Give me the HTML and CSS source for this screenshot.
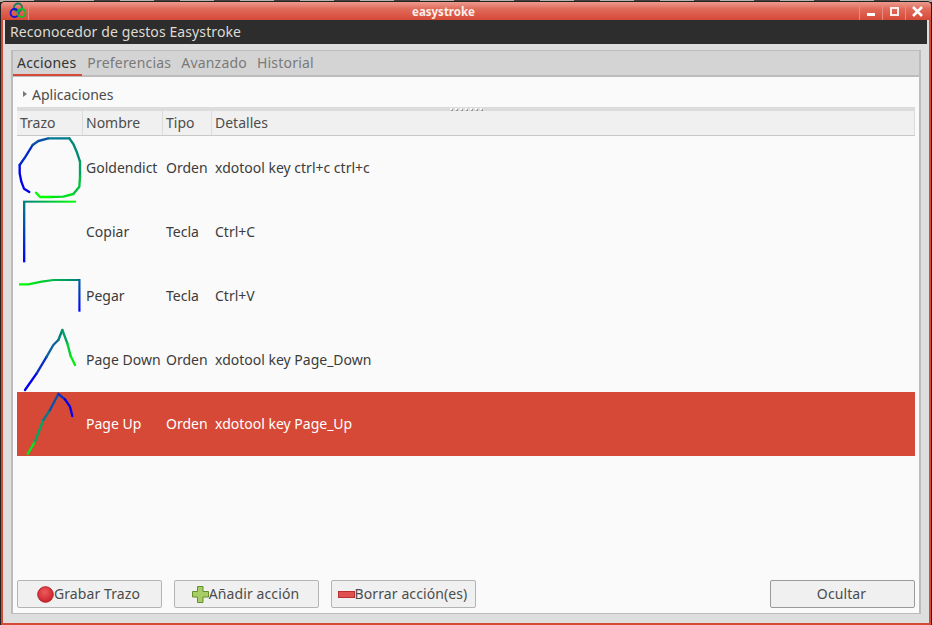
FILE: index.html
```html
<!DOCTYPE html>
<html lang="es">

<head>
    <meta charset="UTF-8" />
    <meta name="viewport" content="width=device-width, initial-scale=1.0" />
    <title>easystroke</title>
    <link rel="stylesheet" href="styles.css">
</head>

<body>
    <div class="behind"></div>
    <div class="window">
        <div class="titlebar">
            <div class="titleicon">
                <svg width="18" height="17" viewBox="0 0 18 17" fill="none" stroke-width="1.8">
                    <circle cx="9" cy="5.5" r="4" stroke="#14805a" />
                    <circle cx="5.5" cy="11" r="4" stroke="#1212e0" />
                    <circle cx="12.5" cy="11" r="4" stroke="#0cc030" />
                </svg>
            </div>
            <div class="titletext">easystroke</div>
            <div class="winbtns">
                <div class="winbtn"><span class="icon-min"></span></div>
                <div class="winbtn"><span class="icon-max"></span></div>
                <div class="winbtn">
                    <svg width="11" height="11" viewBox="0 0 11 11" stroke="#fff" stroke-width="2.6">
                        <path d="M1 1 10 10M10 1 1 10" />
                    </svg>
                </div>
            </div>
        </div>

        <div class="appbar">Reconocedor de gestos Easystroke</div>

        <div class="notebook">
            <div class="tabs">
                <div class="tab active">Acciones</div>
                <div class="tab">Preferencias</div>
                <div class="tab">Avanzado</div>
                <div class="tab">Historial</div>
            </div>

            <div class="page">
                <div class="expander"><span class="arrow"></span>Aplicaciones</div>
                <div class="handle"><span></span><span></span><span></span><span></span><span></span><span></span><span></span></div>

                <div class="thead">
                    <div>Trazo</div>
                    <div>Nombre</div>
                    <div>Tipo</div>
                    <div>Detalles</div>
                </div>

                <div class="row">
                    <svg class="stroke" viewBox="21 18 198 192" fill="none" stroke-width="7" stroke-linecap="round" stroke-linejoin="round">
                        <path stroke="#0000f0" d="M58 186 42 176 34 155 29 130 29 105" />
                        <path stroke="#0028c8" d="M29 105 45 82 68 45" />
                        <path stroke="#0a50a8" d="M68 45 85 33 115 25" />
                        <path stroke="#007890" d="M115 25H178" />
                        <path stroke="#008878" d="M178 25 190 42 200 65 210 95" />
                        <path stroke="#00a060" d="M210 95V140" />
                        <path stroke="#00c040" d="M210 140 208 170 190 192" />
                        <path stroke="#00e020" d="M190 192 160 200 120 201" />
                        <path stroke="#00ff00" d="M120 201H90L78 188" />
                    </svg>
                    <div>Goldendict</div>
                    <div>Orden</div>
                    <div>xdotool key ctrl+c ctrl+c</div>
                </div>

                <div class="row">
                    <svg class="stroke" viewBox="21 210 198 192" fill="none">
                        <defs>
                            <linearGradient id="copiarV" gradientUnits="userSpaceOnUse" x1="0" y1="397" x2="0" y2="215">
                                <stop offset="0" stop-color="#0000ff" />
                                <stop offset="1" stop-color="#007f7f" />
                            </linearGradient>
                            <linearGradient id="copiarH" gradientUnits="userSpaceOnUse" x1="43" y1="0" x2="198" y2="0">
                                <stop offset="0" stop-color="#007f7f" />
                                <stop offset="1" stop-color="#00ff00" />
                            </linearGradient>
                        </defs>
                        <rect x="39" y="215" width="7" height="182" fill="url(#copiarV)" />
                        <rect x="39" y="212" width="159" height="6" fill="url(#copiarH)" />
                    </svg>
                    <div>Copiar</div>
                    <div>Tecla</div>
                    <div>Ctrl+C</div>
                </div>

                <div class="row">
                    <svg class="stroke" viewBox="21 -18 198 192" fill="none">
                        <defs>
                            <linearGradient id="pegarH" gradientUnits="userSpaceOnUse" x1="30" y1="0" x2="208" y2="0">
                                <stop offset="0" stop-color="#00ff00" />
                                <stop offset="1" stop-color="#007f7f" />
                            </linearGradient>
                            <linearGradient id="pegarV" gradientUnits="userSpaceOnUse" x1="0" y1="30" x2="0" y2="125">
                                <stop offset="0" stop-color="#005f9f" />
                                <stop offset="1" stop-color="#0000ff" />
                            </linearGradient>
                        </defs>
                        <path stroke="url(#pegarH)" stroke-width="6.5" d="M27 43H55L95 35 130 30H208" />
                        <rect x="205" y="27" width="6.5" height="98" fill="url(#pegarV)" />
                    </svg>
                    <div>Pegar</div>
                    <div>Tecla</div>
                    <div>Ctrl+V</div>
                </div>

                <div class="row">
                    <svg class="stroke" viewBox="21 174 198 192" fill="none" stroke-width="7" stroke-linecap="round" stroke-linejoin="round">
                        <path stroke="#0000f0" d="M45 360 80 310" />
                        <path stroke="#0a30c0" d="M80 310 110 260" />
                        <path stroke="#0a60a0" d="M110 260 130 225 145 210" />
                        <path stroke="#007f7f" d="M145 210 157 180" />
                        <path stroke="#00a060" d="M157 180 172 220" />
                        <path stroke="#00d030" d="M172 220 182 258" />
                        <path stroke="#00f010" d="M182 258 195 285" />
                    </svg>
                    <div>Page Down</div>
                    <div>Orden</div>
                    <div>xdotool key Page_Down</div>
                </div>

                <div class="row selected">
                    <svg class="stroke" viewBox="21 366 198 192" fill="none" stroke-width="7" stroke-linecap="round" stroke-linejoin="round">
                        <path stroke="#00e820" d="M53 552 75 515" />
                        <path stroke="#00a860" d="M75 515 100 450" />
                        <path stroke="#0a7888" d="M100 450 120 420" />
                        <path stroke="#0a50a8" d="M120 420 145 372" />
                        <path stroke="#0830c8" d="M145 372 165 388" />
                        <path stroke="#0000f0" d="M165 388 180 410 187 438" />
                    </svg>
                    <div>Page Up</div>
                    <div>Orden</div>
                    <div>xdotool key Page_Up</div>
                </div>

                <div class="actions">
                    <button class="btn">
                        <svg width="17" height="17" viewBox="0 0 17 17">
                            <defs>
                                <radialGradient id="recordFill" cx="0.45" cy="0.35" r="0.7">
                                    <stop offset="0" stop-color="#ee5a5a" />
                                    <stop offset="1" stop-color="#c81e28" />
                                </radialGradient>
                            </defs>
                            <circle cx="8.5" cy="8.5" r="7.8" fill="url(#recordFill)" stroke="#b02028" />
                        </svg>Grabar Trazo
                    </button>
                    <button class="btn">
                        <svg width="17" height="17" viewBox="0 0 17 17">
                            <path d="M5.5 .5H11V5.5H16.5V11H11V16.5H5.5V11H.5V5.5H5.5Z" fill="#a8cc66" stroke="#62902c" />
                        </svg>Añadir acción
                    </button>
                    <button class="btn">
                        <svg width="17" height="7" viewBox="0 0 17 7">
                            <rect x=".5" y=".5" width="16" height="6" fill="#e05050" stroke="#b83030" />
                        </svg>Borrar acción(es)
                    </button>
                    <button class="btn hide">Ocultar</button>
                </div>
            </div>
        </div>
    </div>
</body>

</html>
```

FILE: styles.css
```css
* {
    box-sizing: border-box;
}

html,
body {
    margin: 0;
    padding: 0;
    width: 932px;
    height: 625px;
    overflow: hidden;
}

body {
    font-family: 'Noto Sans', 'Open Sans', sans-serif;
    font-size: 14px;
    color: #3c3c3c;
    background: #222;
}

.behind {
    height: 2px;
    background: repeating-linear-gradient(to right, #b8b0a8 0, #b8b0a8 34px, #4a4440 34px, #4a4440 60px);
}

.window {
    height: 623px;
    display: flex;
    flex-direction: column;
    background: #dedede;
    border-right: 2px solid #d64937;
    border-bottom: 2px solid #d64937;
    border-left: 2px solid #d64937;
    box-shadow: 0 0 0 1px #222;
    border-radius: 4px 4px 0 0;
    margin: 0 1px;
}

.titlebar {
    height: 18px;
    display: flex;
    align-items: center;
    position: relative;
    margin: 0 -2px;
    background: linear-gradient(to bottom, #ec9a8e, #df6a5a 40%, #d64937);
    border-radius: 4px 4px 0 0;
}

.titleicon {
    width: 28px;
    height: 18px;
    padding-left: 8px;
    border-right: 1px solid #e88a7c;
}

.titleicon svg {
    display: block;
}

.titletext {
    position: absolute;
    left: 0;
    right: 0;
    text-align: center;
    font-size: 11.5px;
    font-weight: bold;
    color: #fbeeea;
    padding-right: 45px;
}

.winbtns {
    margin-left: auto;
    margin-right: 3px;
    display: flex;
    position: relative;
}

.winbtn {
    width: 23px;
    height: 18px;
    display: flex;
    align-items: center;
    justify-content: center;
    border-left: 1px solid #e88a7c;
}

.icon-min {
    width: 8px;
    height: 3px;
    margin-top: 7px;
    background: #fff;
}

.icon-max {
    width: 9px;
    height: 9px;
    border: 2px solid #fbeeea;
}

.appbar {
    height: 24px;
    margin: 0 2px;
    padding: 0 5px;
    line-height: 23px;
    letter-spacing: 0.1px;
    background: #2d2d2d;
    color: #dfdbd2;
}

.notebook {
    flex: 1;
    margin: 6px 8px 9px;
    display: flex;
    flex-direction: column;
    border: 2px solid #bcbcbc;
    border-bottom-width: 1px;
    border-top-width: 1px;
}

.tabs {
    height: 26px;
    display: flex;
    background: #d4d4d4;
    border-bottom: 2px solid #bcbcbc;
}

.tab {
    padding: 0 5px;
    line-height: 24px;
    letter-spacing: 0.2px;
    color: #7a7a7a;
    height: 25px;
}

.tab.active {
    padding: 0 6px 0 4px;
    color: #333;
    border-bottom: 2px solid #d64937;
}

.page {
    flex: 1;
    display: flex;
    flex-direction: column;
    padding: 0 4px 4px;
    background: #fafafa;
}

.expander {
    height: 30px;
    display: flex;
    align-items: center;
    padding-left: 6px;
    padding-top: 4px;
    color: #4c4c4c;
}

.arrow {
    width: 0;
    height: 0;
    margin-right: 5px;
    border-left: 4px solid #777;
    border-top: 3px solid transparent;
    border-bottom: 3px solid transparent;
}

.handle {
    height: 4px;
    display: flex;
    justify-content: center;
    align-items: center;
    gap: 3px;
    background: #dcdcdc;
}

.handle span {
    width: 2px;
    height: 2px;
    background: #f8f8f8;
    box-shadow: 1px 1px 0 #999;
}

.thead {
    height: 25px;
    display: grid;
    grid-template-columns: 66px 80px 49px 1fr;
    background: #f0f0f0;
    border-bottom: 1px solid #c8c8c8;
    color: #4c4c4c;
}

.thead div {
    padding-left: 3px;
    line-height: 23px;
    border-right: 1px solid #dcdcdc;
}

.row {
    height: 64px;
    display: grid;
    grid-template-columns: 66px 80px 49px 1fr;
    align-items: center;
}

.row div {
    padding-left: 3px;
    padding-bottom: 2px;
    white-space: nowrap;
}

.stroke {
    display: block;
    width: 66px;
    height: 64px;
    overflow: visible;
}

.selected {
    background: #d64937;
    color: #fff;
}

.actions {
    margin-top: auto;
    display: flex;
    gap: 12px;
    margin-bottom: 1px;
}

.btn {
    width: 145px;
    height: 28px;
    padding: 0 2px 2px 0;
    display: flex;
    align-items: center;
    justify-content: center;
    font-family: inherit;
    font-size: 14px;
    letter-spacing: 0.1px;
    color: #4c4c4c;
    background: #f0f0f0;
    border: 1px solid #b4b4b4;
    border-radius: 2px;
}

.btn svg {
    margin-top: 2px;
}

.hide {
    margin-left: auto;
    border-color: #9a9a9a;
}
```
